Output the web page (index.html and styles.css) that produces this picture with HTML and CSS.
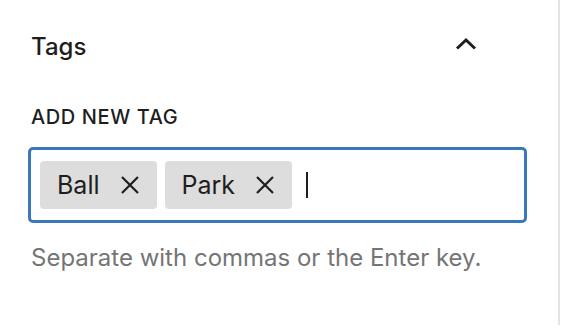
FILE: index.html
```html
<!DOCTYPE html>
<html lang="en">
<head>
    <meta charset="UTF-8">
    <meta name="viewport" content="width=device-width, initial-scale=1.0">
    <title>Tags</title>
    <link rel="stylesheet" href="styles.css">
</head>
<body>

    <div class="panel">
        <div class="panel-header">
            <h2 class="panel-title">Tags</h2>
            <button class="toggle" aria-label="Collapse">
                <svg width="22" height="14" viewBox="0 0 22 14">
                    <path d="M2 11.5 L11 3 L20 11.5" fill="none" stroke="#1e1e1e" stroke-width="3"/>
                </svg>
            </button>
        </div>

        <label class="field-label" for="tag-input">Add new tag</label>
        <div class="token-field">
            <span class="token">Ball
                <svg class="remove" width="20" height="20" viewBox="0 0 20 20">
                    <path d="M2 2 L18 18 M18 2 L2 18" stroke="#1e1e1e" stroke-width="2.2"/>
                </svg>
            </span>
            <span class="token">Park
                <svg class="remove" width="20" height="20" viewBox="0 0 20 20">
                    <path d="M2 2 L18 18 M18 2 L2 18" stroke="#1e1e1e" stroke-width="2.2"/>
                </svg>
            </span>
            <span class="caret"></span>
        </div>
        <p class="help">Separate with commas or the Enter key.</p>
    </div>

</body>
</html>
```

FILE: styles.css
```css
body {
    margin: 0;
    font-family: Inter, "Noto Sans", sans-serif;
    background: #fff;
    color: #1e1e1e;
}
.panel {
    width: 530px;
    height: 325px;
    padding: 0 0 0 28px;
    border-right: 2px solid #e4e4e4;
}
.panel-header {
    display: flex;
    justify-content: space-between;
    align-items: center;
    height: 92px;
    padding-right: 81px;
}
.panel-title {
    margin: 0 0 0 3px;
    font-size: 24px;
    font-weight: 500;
}
.toggle {
    border: none;
    background: none;
    padding: 0;
    display: flex;
    margin-bottom: 4px;
}
.field-label {
    display: block;
    margin: 12px 0 0 3px;
    font-size: 20px;
    font-weight: 500;
    text-transform: uppercase;
    letter-spacing: 0.6px;
    line-height: 26px;
}
.token-field {
    display: flex;
    align-items: center;
    gap: 8px;
    box-sizing: border-box;
    width: 499px;
    height: 76px;
    margin-top: 17px;
    padding: 0 9px;
    border: 3px solid #3a78bd;
    border-radius: 5px;
}
.token {
    display: flex;
    align-items: center;
    gap: 20px;
    height: 48px;
    padding: 0 17px;
    background: #dddddd;
    border-radius: 4px;
    font-size: 25px;
}
.remove {
    display: block;
}
.caret {
    width: 2px;
    height: 26px;
    margin-left: 6px;
    background: #1e1e1e;
}
.help {
    margin: 20px 0 0 3px;
    font-size: 24px;
    color: #757575;
}
```
